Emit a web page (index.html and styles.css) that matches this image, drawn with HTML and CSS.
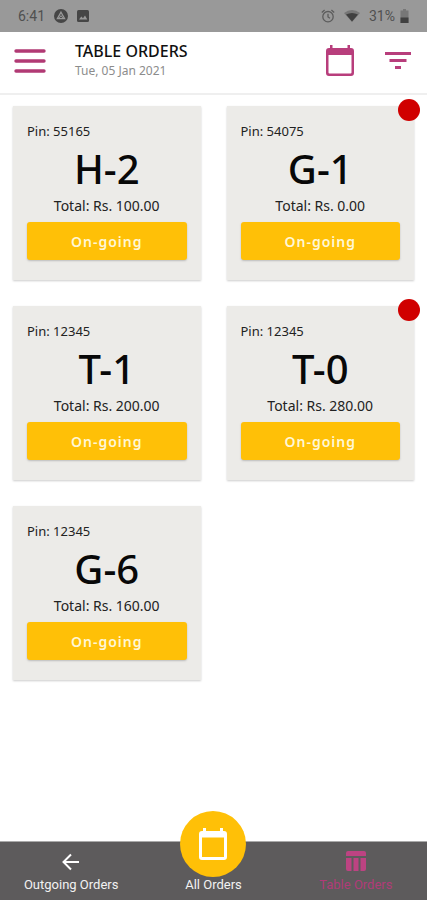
FILE: index.html
```html
<!DOCTYPE html>
<html lang="en">
<head>
<meta charset="utf-8">
<meta name="viewport" content="width=device-width, initial-scale=1">
<title>Table Orders</title>
<link rel="stylesheet" href="styles.css">
</head>
<body>
<div class="status">
  <span class="clock">6:41</span>
  <svg width="14" height="14" viewBox="0 0 14 14" aria-hidden="true"><circle cx="7" cy="7" r="7" fill="#464646"/><path d="M7 3.2 10.6 9.6H3.4Z" fill="none" stroke="#999" stroke-width="1.3"/><path d="M5 9.4 7 6.6 9 9.4" fill="none" stroke="#999"/></svg>
  <svg width="12" height="12" viewBox="0 0 12 12" aria-hidden="true"><rect width="12" height="12" rx="1.5" fill="#464646"/><path d="M2 9.5 4.3 6.4 6 8.3 8 5.5 10.3 9.5Z" fill="#999"/></svg>
  <span class="spacer"></span>
  <svg class="alarm" width="14" height="14" viewBox="0 0 14 14" fill="none" stroke="#5c5c5c" stroke-width="1.3" aria-hidden="true"><circle cx="7" cy="7.7" r="5.2"/><path d="M7 4.8V8L9 9.3M.8 3.4 3.6 1M13.2 3.4 10.4 1"/></svg>
  <svg width="16" height="12" viewBox="0 0 16 12" aria-hidden="true"><path d="M0 3Q8-2.8 16 3L8 12Z" fill="#777"/><path d="M2 4.6Q8 1.4 14 4.6L8 11.6Z" fill="#404040"/></svg>
  <span class="charge">31%</span>
  <svg width="9" height="14" viewBox="0 0 9 14" aria-hidden="true"><path d="M3 0H6V1.5H8.5V14H.5V1.5H3Z" fill="#777"/><path d="M.5 8.5H8.5V14H.5Z" fill="#404040"/></svg>
</div>

<header class="header">
  <button class="icon-button" aria-label="Menu"><svg width="32" height="26" viewBox="0 0 32 26" stroke="#b13a74" stroke-width="3.4" stroke-linecap="round" aria-hidden="true"><path d="M2 3H30M2 13H30M2 23H30"/></svg></button>
  <div class="heading">
    <h1>TABLE ORDERS</h1>
    <p>Tue, 05 Jan 2021</p>
  </div>
  <button class="icon-button" aria-label="Pick a date"><svg width="30" height="32" viewBox="0 0 30 32" aria-hidden="true"><path d="M5 0H7.500V3H22.500V0H25V3H26Q29 3 29 6V28Q29 31 26 31H4Q1 31 1 28V6Q1 3 4 3H5ZM3.500 10V27.500Q3.500 28.500 4.500 28.500H25.500Q26.500 28.500 26.500 27.500V10Z" fill="#b83e7c" fill-rule="evenodd"/></svg></button>
  <button class="icon-button filter" aria-label="Filter"><svg width="26" height="18" viewBox="0 0 26 18" fill="#b83e7c" aria-hidden="true"><path d="M0 0H26V3H0ZM4.500 7H21.500V10H4.500ZM10 14H16V17H10Z"/></svg></button>
</header>

<main class="orders">
  <article class="card"><p class="pin">Pin: 55165</p><h2>H-2</h2><p class="total">Total: Rs. 100.00</p><button class="state">On-going</button></article>
  <article class="card"><span class="dot"></span><p class="pin">Pin: 54075</p><h2>G-1</h2><p class="total">Total: Rs. 0.00</p><button class="state">On-going</button></article>
  <article class="card"><p class="pin">Pin: 12345</p><h2>T-1</h2><p class="total">Total: Rs. 200.00</p><button class="state">On-going</button></article>
  <article class="card"><span class="dot"></span><p class="pin">Pin: 12345</p><h2>T-0</h2><p class="total">Total: Rs. 280.00</p><button class="state">On-going</button></article>
  <article class="card"><p class="pin">Pin: 12345</p><h2>G-6</h2><p class="total">Total: Rs. 160.00</p><button class="state">On-going</button></article>
</main>

<nav class="tabs">
  <a class="tab" href="#outgoing"><svg width="18" height="18" viewBox="0 0 18 18" fill="none" stroke="#fff" stroke-width="2" aria-hidden="true"><path d="M17 9H2M9 1.500 1.500 9 9 16.500"/></svg><span>Outgoing Orders</span></a>
  <a class="tab" href="#all"><span class="bubble"><svg width="30" height="33" viewBox="0 0 30 33" aria-hidden="true"><path d="M5 0H8V3H22V0H25V3H26Q29 3 29 6V29Q29 32 26 32H4Q1 32 1 29V6Q1 3 4 3H5ZM4 9.500V29H26V9.500Z" fill="#fff" fill-rule="evenodd"/></svg></span><span>All Orders</span></a>
  <a class="tab active" href="#table"><svg width="20" height="20" viewBox="0 0 20 20" fill="#bd4382" aria-hidden="true"><path d="M0 2Q0 0 2 0H18Q20 0 20 2V5H0ZM0 7H5.500V20H2Q0 20 0 18ZM7.500 7H12.500V20H7.500ZM14.500 7H20V18Q20 20 18 20H14.500Z"/></svg><span>Table Orders</span></a>
</nav>
</body>
</html>
```
FILE: styles.css
```css
* {
  box-sizing: border-box;
}

body {
  display: flex;
  flex-direction: column;
  min-height: 100vh;
  margin: 0;
  background: #fff;
  color: #222;
  font-family: "Noto Sans", sans-serif;
}

h1,
h2,
p {
  margin: 0;
}

button {
  border: 0;
  padding: 0;
  font-family: inherit;
}

.status {
  display: flex;
  align-items: center;
  height: 32px;
  padding: 0 18px;
  gap: 9px;
  background: #999;
  color: #505050;
  font: 14px/32px Roboto, sans-serif;
}

.spacer {
  flex: 1;
}

.charge {
  margin-right: -4px;
}

.header {
  display: flex;
  align-items: center;
  height: 63px;
  padding: 0 16px 4px 14px;
  border-bottom: 2px solid #efefef;
}

.icon-button {
  display: flex;
  background: none;
}

.heading {
  flex: 1;
  margin-left: 29px;
}

h1 {
  color: #111;
  font-size: 16px;
  line-height: 20px;
  font-weight: 500;
}

.heading p {
  color: #8c8c8c;
  font-size: 12px;
  line-height: 20px;
}

.filter {
  margin-left: 30px;
}

.orders {
  display: grid;
  grid-template-columns: 1fr 1fr;
  gap: 26px;
  align-content: start;
  flex: 1;
  padding: 11px 13px;
}

.card {
  position: relative;
  padding: 15px 14px 20px;
  background: #ecebe8;
  box-shadow: 0 1px 2px #ccc;
  text-align: center;
}

.pin,
.total {
  font-size: 13px;
  line-height: 20px;
}

.pin {
  text-align: left;
}

.total {
  font-size: 14px;
}

h2 {
  color: #080808;
  font-size: 40px;
  line-height: 55px;
  font-weight: 500;
}

.state {
  width: 100%;
  height: 38px;
  margin-top: 6px;
  border-radius: 3px;
  background: #ffc007;
  box-shadow: 0 1px 2px #bbb;
  color: #fff7d6;
  font-size: 14px;
  font-weight: 600;
  letter-spacing: 1px;
}

.dot {
  position: absolute;
  top: -7px;
  right: -6px;
  width: 22px;
  height: 22px;
  border-radius: 50%;
  background: #d00000;
}

.tabs {
  position: sticky;
  bottom: 0;
  display: grid;
  grid-template-columns: repeat(3, 1fr);
  height: 59px;
  border-top: 1px solid #aaa;
  background: #5d5b5c;
}

.tab {
  position: relative;
  display: flex;
  flex-direction: column;
  align-items: center;
  justify-content: flex-end;
  gap: 5px;
  padding-bottom: 6px;
  color: #f2f2f2;
  font: 13px/18px Roboto, sans-serif;
  text-decoration: none;
}

.tab.active {
  color: #b03b78;
}

.bubble {
  position: absolute;
  top: -31px;
  display: flex;
  align-items: center;
  justify-content: center;
  width: 66px;
  height: 66px;
  border-radius: 50%;
  background: #ffc007;
}
```
